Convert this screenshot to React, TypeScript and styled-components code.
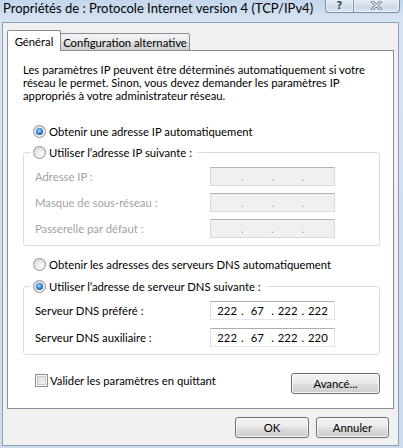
import React from "react";
import styled, { createGlobalStyle, css } from "styled-components";

const FONT = `"Lato", "Segoe UI", "Liberation Sans", sans-serif`;

const GlobalStyle = createGlobalStyle`
  html, body { margin: 0; padding: 0; background: #cddcee; }
  body { font-family: ${FONT}; font-size: 11.3px; color: #000; }
  *, *::before, *::after { box-sizing: border-box; }
`;

const Window = styled.div`
  width: 403px;
  height: 448px;
  display: flex;
  flex-direction: column;
  padding: 0 4px 2px 2px;
  overflow: hidden;
  background: linear-gradient(180deg, #c3d6ec 0px, #d6e3f2 20px, #cbdcef 100%);
`;

const TitleBar = styled.div`
  height: 22px;
  flex: none;
  display: flex;
  justify-content: space-between;
  align-items: flex-start;
`;

const Title = styled.div`
  font-size: 13px;
  line-height: 16px;
  padding-left: 1px;
  white-space: nowrap;
  color: #000;
`;

const CaptionGroup = styled.div`
  display: flex;
  margin: -1px -1px 0 0;
`;

const CaptionButton = styled.div<{ $w: number }>`
  width: ${(p) => p.$w}px;
  height: 14px;
  display: flex;
  align-items: center;
  justify-content: center;
  border: 1px solid #7f8ea3;
  border-top: none;
  background: linear-gradient(180deg, #e6edf6 0%, #d6e1ee 50%, #c8d7e9 51%, #d9e4f1 100%);
  box-shadow: inset 0 0 0 1px rgba(255, 255, 255, 0.55);
  color: #3b4656;
  font-family: "DejaVu Sans", sans-serif;
  font-size: 10px;
  font-weight: bold;
  &:first-child {
    border-right: none;
    border-bottom-left-radius: 4px;
  }
  &:last-child {
    border-bottom-right-radius: 4px;
  }
`;

const Client = styled.div`
  flex: 1;
  display: flex;
  flex-direction: column;
  background: #f0f0f0;
  border: 1px solid #8d9db2;
  padding: 7px 4px 0 4px;
`;

const TabRow = styled.div`
  display: flex;
  align-items: flex-end;
  height: 21px;
  margin-bottom: -1px;
  position: relative;
  z-index: 1;
`;

const Tab = styled.div<{ $active?: boolean; $w: number }>`
  width: ${(p) => p.$w}px;
  height: ${(p) => (p.$active ? 21 : 18)}px;
  display: flex;
  align-items: center;
  justify-content: center;
  white-space: nowrap;
  border: 1px solid #898c95;
  border-radius: 2px 2px 0 0;
  ${(p) =>
    p.$active
      ? css`
          border-bottom: none;
          background: #fff;
        `
      : css`
          background: linear-gradient(180deg, #f3f3f3 0%, #ebebeb 50%, #dedede 51%, #d0d0d0 100%);
        `}
  & + & {
    margin-left: -1px;
  }
`;

const Panel = styled.div`
  flex: 1;
  display: flex;
  flex-direction: column;
  background: #fff;
  border: 1px solid #898c95;
  padding: 12px 13px 14px 15px;
`;

const Intro = styled.p`
  margin: 0;
  line-height: 13px;
  white-space: nowrap;
`;

const OptionRow = styled.div<{ $mt: number }>`
  display: flex;
  align-items: center;
  gap: 3px;
  height: 15px;
  margin: ${(p) => p.$mt}px 0 0 10px;
  white-space: nowrap;
`;

const Radio = styled.span<{ $checked?: boolean }>`
  width: 13px;
  height: 13px;
  flex: none;
  border-radius: 50%;
  border: 1px solid #929292;
  position: relative;
  background: radial-gradient(circle at 62% 68%, #fdfdfd 0%, #ececec 40%, #cfcfcf 100%);
  ${(p) =>
    p.$checked &&
    css`
      &::after {
        content: "";
        position: absolute;
        left: 2px;
        top: 2px;
        width: 7px;
        height: 7px;
        border-radius: 50%;
        background: radial-gradient(circle at 45% 40%, #a8dcff 0%, #3f95e2 40%, #11529c 75%, #0b3a73 100%);
      }
    `}
`;

const Group = styled.fieldset<{ $mt: number }>`
  margin: ${(p) => p.$mt}px 0 0 0;
  padding: 0;
  min-width: 0;
  border: 1px solid #d5dfe5;
  border-radius: 3px;
`;

const Legend = styled.legend`
  display: flex;
  align-items: center;
  gap: 3px;
  height: 15px;
  margin-left: 7px;
  padding: 0 5px 0 2px;
  white-space: nowrap;
`;

const GroupBody = styled.div<{ $gap: number }>`
  display: grid;
  grid-template-columns: 175px 125px;
  row-gap: ${(p) => p.$gap}px;
  align-items: center;
  padding: 7px 0 7px 11px;
`;

const FieldLabel = styled.span<{ $disabled?: boolean }>`
  color: ${(p) => (p.$disabled ? "#a2a2a2" : "#000")};
  white-space: nowrap;
`;

const IpField = styled.div<{ $disabled?: boolean }>`
  height: 19px;
  display: flex;
  align-items: center;
  padding: 0 3px;
  border: 1px solid;
  ${(p) =>
    p.$disabled
      ? css`
          border-color: #b4b4b4 #dadada #dadada #dadada;
          background: #f0f0f0;
          color: #a8a8a8;
        `
      : css`
          border-color: #abadb3 #e2e3ea #e3e9ef #dbdfe6;
          background: #fff;
          color: #000;
        `}
`;

const Octet = styled.span`
  flex: 1;
  text-align: center;
`;

const Dot = styled.span`
  width: 4px;
  text-align: center;
`;

const BottomRow = styled.div`
  display: flex;
  justify-content: space-between;
  align-items: flex-start;
  margin-top: 18px;
`;

const CheckOption = styled.div`
  display: flex;
  align-items: center;
  gap: 2px;
  height: 13px;
  margin: 1px 0 0 12px;
  white-space: nowrap;
`;

const Check = styled.span`
  width: 13px;
  height: 13px;
  flex: none;
  border: 1px solid #8e8f8f;
  background: linear-gradient(135deg, #d6d6d6 0%, #ececec 55%, #fafafa 100%);
  box-shadow: inset 0 0 0 1px #f6f6f6, inset 0 0 0 2px #c9c9c9;
`;

const PushButton = styled.button<{ $w: number }>`
  width: ${(p) => p.$w}px;
  height: 21px;
  padding: 0;
  font: inherit;
  color: #000;
  border: 1px solid #707070;
  border-radius: 3px;
  background: linear-gradient(180deg, #f2f2f2 0%, #ebebeb 48%, #dddddd 52%, #cfcfcf 100%);
  box-shadow: inset 0 0 0 1px rgba(255, 255, 255, 0.75);
`;

const ButtonRow = styled.div`
  display: flex;
  justify-content: flex-end;
  gap: 7px;
  padding: 8px 5px 7px 0;
`;

const CloseGlyph = () => (
  <svg width="11" height="9" viewBox="0 0 11 9">
    <path d="M1.5 1 L9.5 8 M9.5 1 L1.5 8" stroke="#5f6d80" strokeWidth="2.8" strokeLinecap="round" />
    <path d="M1.5 1 L9.5 8 M9.5 1 L1.5 8" stroke="#eef3f9" strokeWidth="1.2" strokeLinecap="round" />
  </svg>
);

const IpAddress: React.FC<{ octets?: string[]; disabled?: boolean }> = ({ octets, disabled }) => {
  const parts = octets ?? ["", "", "", ""];
  return (
    <IpField $disabled={disabled}>
      {parts.map((o, i) => (
        <React.Fragment key={i}>
          {i > 0 && <Dot>.</Dot>}
          <Octet>{o}</Octet>
        </React.Fragment>
      ))}
    </IpField>
  );
};

export default function App() {
  return (
    <>
      <GlobalStyle />
      <Window>
        <TitleBar>
          <Title>Propriétés de : Protocole Internet version 4 (TCP/IPv4)</Title>
          <CaptionGroup>
            <CaptionButton $w={28}>?</CaptionButton>
            <CaptionButton $w={47}>
              <CloseGlyph />
            </CaptionButton>
          </CaptionGroup>
        </TitleBar>
        <Client>
          <TabRow>
            <Tab $active $w={54}>Général</Tab>
            <Tab $w={130}>Configuration alternative</Tab>
          </TabRow>
          <Panel>
            <Intro>
              Les paramètres IP peuvent être déterminés automatiquement si votre
              <br />
              réseau le permet. Sinon, vous devez demander les paramètres IP
              <br />
              appropriés à votre administrateur réseau.
            </Intro>

            <OptionRow $mt={22}>
              <Radio $checked />
              Obtenir une adresse IP automatiquement
            </OptionRow>

            <Group $mt={6}>
              <Legend>
                <Radio />
                Utiliser l’adresse IP suivante :
              </Legend>
              <GroupBody $gap={7}>
                <FieldLabel $disabled>Adresse IP :</FieldLabel>
                <IpAddress disabled />
                <FieldLabel $disabled>Masque de sous-réseau :</FieldLabel>
                <IpAddress disabled />
                <FieldLabel $disabled>Passerelle par défaut :</FieldLabel>
                <IpAddress disabled />
              </GroupBody>
            </Group>

            <OptionRow $mt={11}>
              <Radio />
              Obtenir les adresses des serveurs DNS automatiquement
            </OptionRow>

            <Group $mt={7}>
              <Legend>
                <Radio $checked />
                Utiliser l’adresse de serveur DNS suivante :
              </Legend>
              <GroupBody $gap={8}>
                <FieldLabel>Serveur DNS préféré :</FieldLabel>
                <IpAddress octets={["222", "67", "222", "222"]} />
                <FieldLabel>Serveur DNS auxiliaire :</FieldLabel>
                <IpAddress octets={["222", "67", "222", "220"]} />
              </GroupBody>
            </Group>

            <BottomRow>
              <CheckOption>
                <Check />
                Valider les paramètres en quittant
              </CheckOption>
              <PushButton $w={89}>Avancé...</PushButton>
            </BottomRow>
          </Panel>
          <ButtonRow>
            <PushButton $w={74}>OK</PushButton>
            <PushButton $w={73}>Annuler</PushButton>
          </ButtonRow>
        </Client>
      </Window>
    </>
  );
}
